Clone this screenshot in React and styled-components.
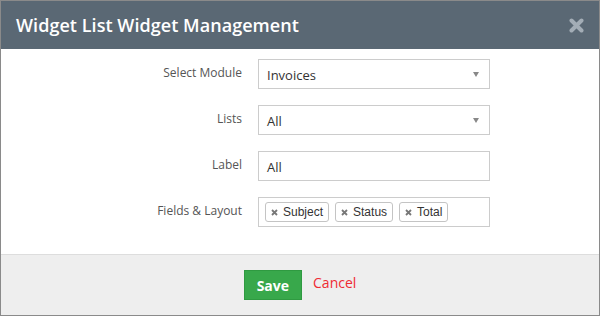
import React from "react";
import styled, { createGlobalStyle } from "styled-components";

const GlobalStyle = createGlobalStyle`
   html, body {
      margin: 0;
      padding: 0;
      background: #ffffff;
   }
   * {
      box-sizing: border-box;
   }
`;

const Dialog = styled.div`
   width: 600px;
   height: 316px;
   border: 1px solid #8a8a8a;
   background: #ffffff;
   display: flex;
   flex-direction: column;
   font-family: "Open Sans", "Liberation Sans", sans-serif;
`;

const Header = styled.div`
   height: 48px;
   background-color: #5a6874;
   display: flex;
   align-items: center;
   justify-content: space-between;
   padding: 0 15px 0 15px;
`;

const Title = styled.h2`
   margin: 0;
   color: #ffffff;
   font-size: 18px;
   font-weight: 600;
   letter-spacing: 0.05px;
`;

const Close = styled.button`
   background: transparent;
   border: none;
   padding: 0;
   width: 16px;
   height: 16px;
   display: flex;
   align-items: center;
   justify-content: center;
   cursor: pointer;
`;

const Body = styled.div`
   flex: 1;
   padding-top: 10px;
   display: grid;
   grid-template-columns: 241px 232px;
   grid-auto-rows: 30px;
   column-gap: 16px;
   row-gap: 16px;
   align-content: start;
`;

const Label = styled.label`
   text-align: right;
   font-size: 12px;
   color: #555555;
   padding-top: 5px;
`;

const Field = styled.div`
   height: 30px;
   border: 1px solid #cccccc;
   background: #ffffff;
   display: flex;
   align-items: center;
   padding: ${(p) => (p.$tags ? "0 6px" : "0 8px")};
   gap: 6px;
   font-size: 13px;
   color: #333333;
`;

const Value = styled.span`
   flex: 1;
   padding-top: 1px;
`;

const Caret = styled.span`
   width: 0;
   height: 0;
   border-left: 3.5px solid transparent;
   border-right: 3.5px solid transparent;
   border-top: 5px solid #888888;
   margin-right: 2px;
`;

const Tag = styled.span`
   height: 20px;
   display: flex;
   align-items: center;
   gap: 5px;
   padding: 0 5px 0 5px;
   border: 1px solid #c4c4c4;
   border-radius: 3px;
   background: #ffffff;
   font-family: "Liberation Sans", Arial, sans-serif;
   font-size: 12px;
   color: #333333;
`;

const Footer = styled.div`
   height: 61px;
   border-top: 1px solid #dddddd;
   background: #eeeeee;
   display: flex;
   justify-content: center;
   align-items: flex-start;
   padding-top: 15px;
   gap: 11px;
`;

const SaveButton = styled.button`
   height: 30px;
   padding: 0 12px;
   background: #38a84b;
   border: 1px solid #2f9a41;
   color: #ffffff;
   font-family: "Open Sans", "Liberation Sans", sans-serif;
   font-weight: 700;
   font-size: 14px;
   cursor: pointer;
`;

const CancelLink = styled.a`
   color: #ee2a33;
   font-size: 14px;
   line-height: 26px;
   text-decoration: none;
   cursor: pointer;
`;

const CloseIcon = () => (
   <svg width="15" height="15" viewBox="0 0 15 15">
      <path
         d="M2.5 2.5 L12.5 12.5 M12.5 2.5 L2.5 12.5"
         stroke="#a3adb6"
         strokeWidth="4"
         strokeLinecap="round"
      />
   </svg>
);

const TagX = () => (
   <svg width="7" height="7" viewBox="0 0 7 7">
      <path d="M1 1 L6 6 M6 1 L1 6" stroke="#777777" strokeWidth="1.8" />
   </svg>
);

const tags = ["Subject", "Status", "Total"];

const App = () => {
   return (
      <>
         <GlobalStyle />
         <Dialog>
            <Header>
               <Title>Widget List Widget Management</Title>
               <Close aria-label="Close">
                  <CloseIcon />
               </Close>
            </Header>
            <Body>
               <Label>Select Module</Label>
               <Field>
                  <Value>Invoices</Value>
                  <Caret />
               </Field>

               <Label>Lists</Label>
               <Field>
                  <Value>All</Value>
                  <Caret />
               </Field>

               <Label>Label</Label>
               <Field>
                  <Value>All</Value>
               </Field>

               <Label>Fields &amp; Layout</Label>
               <Field $tags>
                  {tags.map((t) => (
                     <Tag key={t}>
                        <TagX />
                        {t}
                     </Tag>
                  ))}
               </Field>
            </Body>
            <Footer>
               <SaveButton>Save</SaveButton>
               <CancelLink>Cancel</CancelLink>
            </Footer>
         </Dialog>
      </>
   );
};

export default App;
